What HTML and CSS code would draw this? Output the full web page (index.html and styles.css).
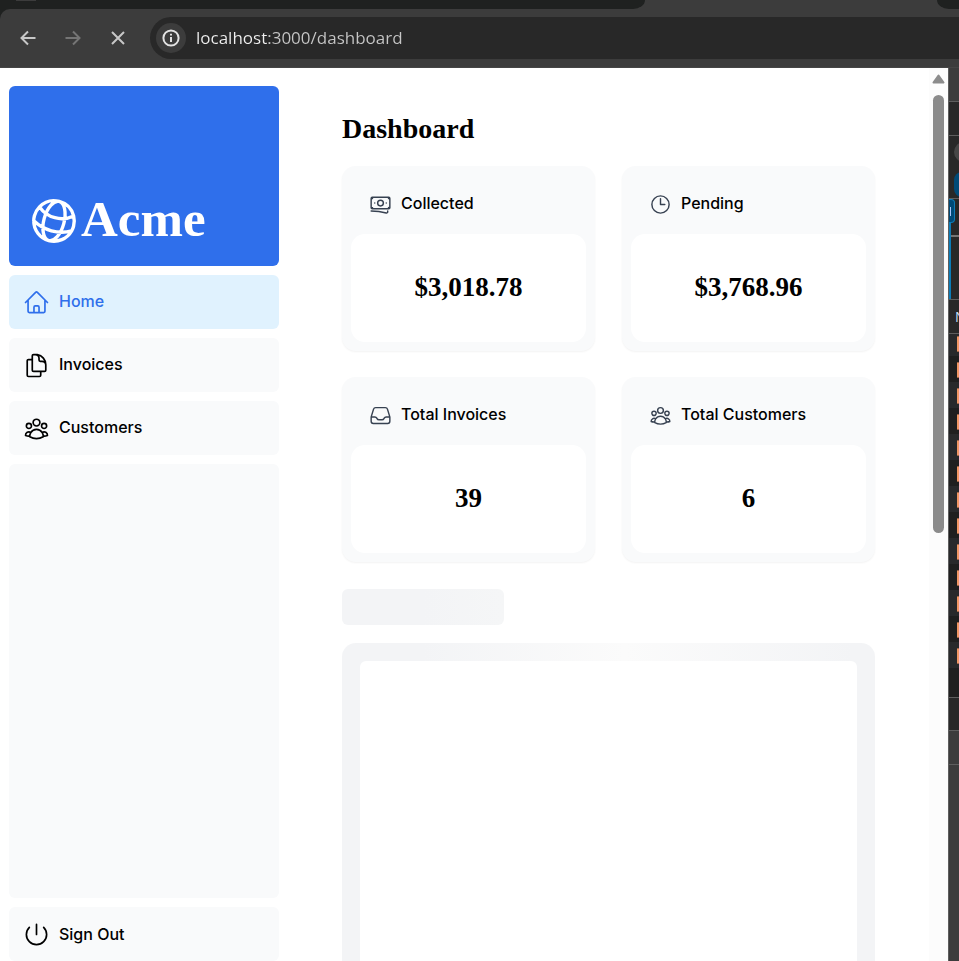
FILE: index.html
```html
<!DOCTYPE html>
<html lang="en">
<head>
<meta charset="utf-8">
<meta name="viewport" content="width=device-width, initial-scale=1">
<title>Acme Dashboard</title>
<link rel="stylesheet" href="styles.css">
</head>
<body>
<header class="chrome">
  <div class="tabs"><div class="tab-idle tab-wide"><i class="tab-hint"></i></div><div class="tab-active"></div><div class="tab-idle tab-end"></div></div>
  <div class="toolbar">
    <button class="tool" aria-label="Back"><svg class="tool-icon" viewBox="0 0 20 20"><path d="M17.500 10H3.500M10 3.500 3.500 10l6.500 6.500"/></svg></button>
    <button class="tool tool-off" aria-label="Forward"><svg class="tool-icon" viewBox="0 0 20 20"><path d="M2.500 10h14M10 3.500l6.500 6.500-6.500 6.500"/></svg></button>
    <button class="tool" aria-label="Stop loading"><svg class="tool-icon" viewBox="0 0 20 20"><path d="m4 4 12 12M16 4 4 16"/></svg></button>
    <div class="address">
      <button class="site-info" aria-label="Site information"><svg viewBox="0 0 20 20"><circle cx="10" cy="10" r="7.600"/><path d="M10 9v5M10 5.800v1.800"/></svg></button>
      <input class="url" type="text" aria-label="Address" value="localhost:3000/dashboard">
    </div>
  </div>
</header>
<div class="window">
  <div class="page">
    <aside class="sidebar">
      <a class="brand" href="#"><svg class="globe" viewBox="0 0 24 24"><path d="M12 21a9.004 9.004 0 0 0 8.716-6.747M12 21a9.004 9.004 0 0 1-8.716-6.747M12 21c2.485 0 4.500-4.030 4.500-9S14.485 3 12 3m0 18c-2.485 0-4.500-4.030-4.500-9S9.515 3 12 3m0 0a8.997 8.997 0 0 1 7.843 4.582M12 3a8.997 8.997 0 0 0-7.843 4.582m15.686 0A11.953 11.953 0 0 1 12 10.500c-2.998 0-5.740-1.100-7.843-2.918m15.686 0A8.959 8.959 0 0 1 21 12c0 .778-.099 1.533-.284 2.253m0 0A17.919 17.919 0 0 1 12 16.500c-3.162 0-6.133-.815-8.716-2.247m0 0A9.015 9.015 0 0 1 3 12c0-1.605.42-3.113 1.157-4.418"/></svg><span class="brand-name">Acme</span></a>
      <nav class="nav">
        <a class="nav-item nav-current" href="#"><svg class="nav-icon" viewBox="0 0 24 24"><path d="m2.250 12 8.954-8.955c.44-.439 1.152-.439 1.591 0L21.750 12M4.500 9.750v10.125c0 .621.504 1.125 1.125 1.125H9.750v-4.875c0-.621.504-1.125 1.125-1.125h2.250c.621 0 1.125.504 1.125 1.125V21h4.125c.621 0 1.125-.504 1.125-1.125V9.750M8.250 21h8.250"/></svg><span class="label">Home</span></a>
        <a class="nav-item" href="#"><svg class="nav-icon" viewBox="0 0 24 24"><path d="M15.750 17.250v3.375c0 .621-.504 1.125-1.125 1.125h-9.750a1.125 1.125 0 0 1-1.125-1.125V7.875c0-.621.504-1.125 1.125-1.125H6.750a9.060 9.060 0 0 1 1.500.124m7.500 10.376h3.375c.621 0 1.125-.504 1.125-1.125V11.250c0-4.460-3.243-8.161-7.500-8.876a9.060 9.060 0 0 0-1.500-.124H9.375c-.621 0-1.125.504-1.125 1.125v3.500m7.500 10.375H9.375a1.125 1.125 0 0 1-1.125-1.125v-9.250m12 6.625v-1.875a3.375 3.375 0 0 0-3.375-3.375h-1.500a1.125 1.125 0 0 1-1.125-1.125v-1.500a3.375 3.375 0 0 0-3.375-3.375H9.750"/></svg><span class="label">Invoices</span></a>
        <a class="nav-item" href="#"><svg class="nav-icon" viewBox="0 0 24 24"><path d="M18 18.720a9.094 9.094 0 0 0 3.741-.479 3 3 0 0 0-4.682-2.720m.94 3.198.001.031c0 .225-.012.447-.037.666A11.944 11.944 0 0 1 12 21c-2.170 0-4.207-.576-5.963-1.584A6.062 6.062 0 0 1 6 18.719m12 0a5.971 5.971 0 0 0-.941-3.197m0 0A5.995 5.995 0 0 0 12 12.750a5.995 5.995 0 0 0-5.058 2.772m0 0a3 3 0 0 0-4.681 2.720 8.986 8.986 0 0 0 3.740.477m.94-3.197a5.971 5.971 0 0 0-.94 3.197M15 6.750a3 3 0 1 1-6 0 3 3 0 0 1 6 0Zm6 3a2.250 2.250 0 1 1-4.500 0 2.250 2.250 0 0 1 4.500 0Zm-13.500 0a2.250 2.250 0 1 1-4.500 0 2.250 2.250 0 0 1 4.500 0Z"/></svg><span class="label">Customers</span></a>
      </nav>
      <div class="filler"></div>
      <button class="nav-item" type="button"><svg class="nav-icon" viewBox="0 0 24 24"><path d="M5.636 5.636a9 9 0 1 0 12.728 0M12 3v9"/></svg><span>Sign Out</span></button>
    </aside>
    <main class="content">
      <h1 class="title">Dashboard</h1>
      <div class="cards">
        <section class="card">
          <div class="card-head"><svg class="card-icon" viewBox="0 0 24 24"><path d="M2.250 18.750a60.070 60.070 0 0 1 15.797 2.101c.727.198 1.453-.342 1.453-1.096V18.750M3.750 4.500v.75A.75.75 0 0 1 3 6h-.75m0 0v-.375c0-.621.504-1.125 1.125-1.125H20.250M2.250 6v9m18-10.500v.75c0 .414.336.75.75.75h.75m-1.500-1.500h.375c.621 0 1.125.504 1.125 1.125v9.750c0 .621-.504 1.125-1.125 1.125h-.375m1.500-1.500H21a.75.75 0 0 0-.75.75v.75m0 0H3.750m0 0h-.375a1.125 1.125 0 0 1-1.125-1.125V15m1.500 1.500v-.75A.75.75 0 0 0 3 15h-.75M15 10.500a3 3 0 1 1-6 0 3 3 0 0 1 6 0Zm3 0h.008v.008H18V10.500Zm-12 0h.008v.008H6V10.500Z"/></svg><h2 class="label">Collected</h2></div>
          <p class="value">$3,018.78</p>
        </section>
        <section class="card">
          <div class="card-head"><svg class="card-icon" viewBox="0 0 24 24"><path d="M12 6v6h4.500m4.500 0a9 9 0 1 1-18 0 9 9 0 0 1 18 0Z"/></svg><h2 class="label">Pending</h2></div>
          <p class="value">$3,768.96</p>
        </section>
        <section class="card">
          <div class="card-head"><svg class="card-icon" viewBox="0 0 24 24"><path d="M2.250 13.500h3.860a2.250 2.250 0 0 1 2.012 1.244l.256.512a2.250 2.250 0 0 0 2.013 1.244h3.218a2.250 2.250 0 0 0 2.013-1.244l.256-.512a2.250 2.250 0 0 1 2.013-1.244h3.859m-19.500.338V18a2.250 2.250 0 0 0 2.250 2.250h15A2.250 2.250 0 0 0 21.750 18v-4.162c0-.224-.034-.447-.1-.661L19.240 5.338a2.250 2.250 0 0 0-2.150-1.588H6.911a2.250 2.250 0 0 0-2.150 1.588L2.350 13.177a2.250 2.250 0 0 0-.1.661Z"/></svg><h2 class="label">Total Invoices</h2></div>
          <p class="value">39</p>
        </section>
        <section class="card">
          <div class="card-head"><svg class="card-icon" viewBox="0 0 24 24"><path d="M18 18.720a9.094 9.094 0 0 0 3.741-.479 3 3 0 0 0-4.682-2.720m.94 3.198.001.031c0 .225-.012.447-.037.666A11.944 11.944 0 0 1 12 21c-2.170 0-4.207-.576-5.963-1.584A6.062 6.062 0 0 1 6 18.719m12 0a5.971 5.971 0 0 0-.941-3.197m0 0A5.995 5.995 0 0 0 12 12.750a5.995 5.995 0 0 0-5.058 2.772m0 0a3 3 0 0 0-4.681 2.720 8.986 8.986 0 0 0 3.740.477m.94-3.197a5.971 5.971 0 0 0-.94 3.197M15 6.750a3 3 0 1 1-6 0 3 3 0 0 1 6 0Zm6 3a2.250 2.250 0 1 1-4.500 0 2.250 2.250 0 0 1 4.500 0Zm-13.500 0a2.250 2.250 0 1 1-4.500 0 2.250 2.250 0 0 1 4.500 0Z"/></svg><h2 class="label">Total Customers</h2></div>
          <p class="value">6</p>
        </section>
      </div>
      <div class="ghost-title"></div>
      <div class="ghost-panel"><div class="ghost-chart"></div></div>
    </main>
    <div class="scrollbar"><svg class="arrow" viewBox="0 0 13 10"><path d="M6.500 1.500 11.500 8.500H1.500Z"/></svg><div class="thumb"></div></div>
  </div>
  <aside class="devtools">
    <div class="dt-bar dt-light"></div>
    <div class="dt-bar"></div>
    <div class="dt-filters"><i class="dt-round"></i><i class="dt-pill"></i></div>
    <div class="dt-timeline"><i class="dt-chip"></i><i class="dt-rule"></i></div>
    <div class="dt-bar dt-name">N</div>
    <div class="dt-rows">
      <i class="dt-row dt-first"></i><i class="dt-row"></i><i class="dt-row"></i><i class="dt-row"></i><i class="dt-row"></i><i class="dt-row"></i><i class="dt-row"></i><i class="dt-row"></i><i class="dt-row"></i><i class="dt-row"></i><i class="dt-row"></i><i class="dt-row"></i><i class="dt-row"></i>
    </div>
    <div class="dt-last"></div>
    <div class="dt-bar dt-status"></div>
    <div class="dt-bar dt-light"></div>
    <div class="dt-rest"></div>
  </aside>
</div>
</body>
</html>
```
FILE: styles.css
```css
* { box-sizing: border-box; }
body {
  margin: 0;
  height: 100vh;
  display: flex;
  flex-direction: column;
  overflow: hidden;
  background: #fff;
  color: #000;
  font: 500 16px/23px Inter, "Liberation Sans", sans-serif;
}
h1, h2, p { margin: 0; }
a { color: inherit; text-decoration: none; }
button { border: 0; padding: 0; background: none; font: inherit; color: inherit; text-align: left; }
svg { display: block; flex: none; fill: none; stroke: currentColor; stroke-linecap: round; stroke-linejoin: round; }

/* Browser frame */
.chrome { flex: none; background: #1f2120; }
.tabs { display: flex; height: 9px; background: linear-gradient(90deg, #1f2120 50%, #3c3c3c 50%); }
.tab-idle { background: #1f2120; }
.tab-wide { flex: 1; border-bottom-right-radius: 12px 9px; }
.tab-hint { display: block; width: 20px; height: 1px; margin-left: 16px; background: #3c3c3c; }
.tab-active { width: 292px; background: #3c3c3c; }
.tab-end { width: 22px; border-bottom-left-radius: 12px 9px; }
.toolbar {
  display: flex;
  align-items: center;
  gap: 9px;
  height: 59px;
  padding-left: 10px;
  background: #3c3c3c;
  border-top-left-radius: 10px;
  border-bottom: 1px solid #454545;
}
.tool { display: grid; place-items: center; width: 36px; height: 36px; color: #c7c7c7; }
.tool-off { color: #757575; }
.tool-icon { width: 20px; height: 20px; stroke-width: 2; stroke-linecap: butt; stroke-linejoin: miter; }
.address {
  flex: 1;
  display: flex;
  align-items: center;
  gap: 10px;
  height: 42px;
  margin-left: 5px;
  padding-left: 6px;
  background: #282828;
  border-radius: 21px 0 0 21px;
}
.site-info { display: grid; place-items: center; width: 30px; height: 30px; border-radius: 50%; background: #3c3c3c; color: #e3e3e3; }
.site-info svg { width: 20px; height: 20px; stroke-width: 2; stroke-linecap: butt; }
.url {
  flex: 1;
  min-width: 0;
  border: 0;
  padding: 0;
  outline: 0;
  /* The host is brighter than the rest of the address */
  background: linear-gradient(90deg, #f0f0f0 73px, #c7c7c7 73px);
  background-clip: text;
  color: transparent;
  font: 400 17px/24px "Open Sans", "Noto Sans", sans-serif;
}

/* Page */
.window { flex: 1; display: flex; min-height: 0; }
.page { flex: 1; display: flex; min-width: 0; }
.sidebar { flex: none; display: flex; flex-direction: column; gap: 9px; width: 288px; padding: 18px 9px 0; }
.brand {
  display: flex;
  align-items: flex-end;
  height: 180px;
  padding: 18px;
  border-radius: 6px;
  background: #2f6feb;
  color: #fff;
  font: 700 51px/50px "Liberation Serif", serif;
}
.brand-name { padding-bottom: 4px; }
.globe { width: 54px; height: 54px; stroke-width: 1.5; transform: rotate(15deg); }
.nav { display: flex; flex-direction: column; gap: 9px; }
.nav-item { display: flex; align-items: center; gap: 9px; height: 54px; padding: 0 14px; border-radius: 6px; background: #f9fafb; }
.nav-icon { width: 27px; height: 27px; stroke-width: 1.5; }
.nav-current { background: #e0f2fe; color: #2f6feb; }
.label { padding-bottom: 2px; font: inherit; line-height: 21px; }
.filler { flex: 1; border-radius: 6px; background: #f9fafb; }
.content { flex: 1; display: flex; flex-direction: column; min-width: 0; padding: 43px 54px 0; }
.title { margin-bottom: 19px; font: 700 28px/36px "Liberation Serif", serif; }
.cards { display: grid; grid-template-columns: 1fr 1fr; gap: 26px 27px; }
.card { padding: 9px; border-radius: 14px; background: #f9fafb; box-shadow: 0 1px 2px rgba(0, 0, 0, .05); }
.card-head { display: flex; align-items: center; gap: 9px; padding: 18px; }
.card-icon { width: 23px; height: 23px; stroke-width: 1.5; color: #374151; }
.value { padding: 35px 18px 37px; border-radius: 14px; background: #fff; text-align: center; font: 700 27px/36px "Liberation Serif", serif; }
.ghost-title { flex: none; width: 162px; height: 36px; margin: 27px 0 18px; border-radius: 6px; background: linear-gradient(90deg, #f3f4f6 50%, #f5f6f7); }
.ghost-panel {
  flex: 1;
  display: flex;
  padding: 18px 18px 0;
  border-radius: 14px 14px 0 0;
  background: linear-gradient(90deg, #f3f4f6 15%, #fbfbfb 53%, #f3f4f6 96%);
}
.ghost-chart { flex: 1; border-radius: 6px 6px 0 0; background: #fff; }
.scrollbar { flex: none; display: flex; flex-direction: column; align-items: center; gap: 11px; width: 19px; padding-top: 6px; background: #fcfcfc; }
.arrow { width: 13px; height: 10px; fill: #8b8b8b; stroke: #8b8b8b; stroke-width: 2; }
.thumb { width: 11px; height: 438px; border-radius: 6px; background: #8b8b8b; }

/* Docked panel */
.devtools { flex: none; display: flex; flex-direction: column; width: 11px; overflow: hidden; border-left: 1px solid #5e5e5e; background: #282828; }
.dt-bar { flex: none; height: 34px; border-bottom: 1px solid #5e5e5e; }
.dt-light, .dt-rest { background: #3c3c3c; }
.dt-filters { display: flex; flex-direction: column; gap: 10px; height: 63px; padding: 6px 0 0 5px; border-bottom: 1px solid #5e5e5e; }
.dt-round { flex: none; width: 20px; height: 20px; border-radius: 50%; background: #474747; }
.dt-pill { flex: none; width: 30px; height: 25px; border-radius: 8px; background: #004a77; }
.dt-timeline { flex: none; height: 101px; border-bottom: 1px solid #5e5e5e; background: linear-gradient(#0b7cb8, #0b7cb8) 0 0 / 2px 100% no-repeat; }
.dt-chip { display: block; width: 6px; height: 24px; border: 1px solid #0b7cb8; border-left: 0; border-radius: 0 4px 4px 0; background: linear-gradient(#a8c7fa, #a8c7fa) 1px 7px / 1px 9px no-repeat #004a77; }
.dt-rule { display: block; height: 2px; margin: 12px 0 0 2px; background: #757575; }
.dt-name { padding-left: 6px; color: #c7dff5; font: 400 14px/33px "Open Sans", sans-serif; }
.dt-row { display: flex; height: 26px; padding: 6px 0 0 8px; background: #28292b; }
.dt-row:nth-child(even) { background: #1f1f1f; }
.dt-row::before { content: ""; width: 12px; height: 14px; border: 1px solid #f29766; border-radius: 2px; background: #a84a24; }
.dt-first { height: 22px; padding-top: 2px; }
.dt-last { flex: none; height: 30px; border-bottom: 1px solid #5e5e5e; background: #1f1f1f; }
.dt-status { height: 33px; }
.dt-rest { flex: 1; }
```
